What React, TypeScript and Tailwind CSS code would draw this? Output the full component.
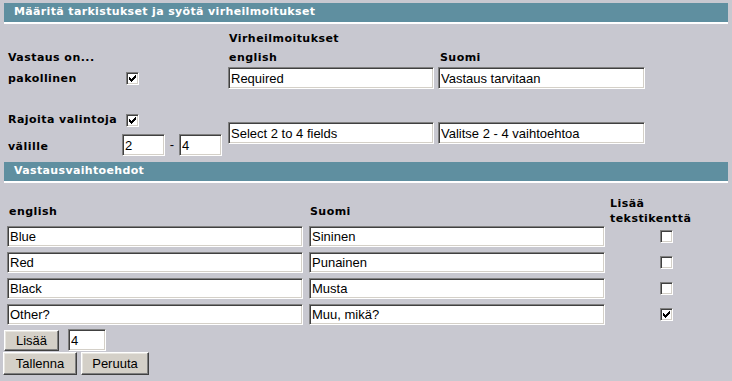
import type { ReactNode } from "react"

const label = "font-['DejaVu_Sans',Verdana,sans-serif] text-[11px] font-bold leading-[15px] tracking-[0.45px] text-black whitespace-nowrap"

function Header({ children }: { children: ReactNode }) {
    return (
        <div className="mx-[4px] flex h-[21px] items-center border-b-2 border-white bg-[#5f8fa0] pl-[10px] font-['DejaVu_Sans',Verdana,sans-serif] text-[11px] font-bold tracking-[0.35px] text-white">
            {children}
        </div>
    )
}

function Field({ value, className = "" }: { value: string; className?: string }) {
    return (
        <input
            readOnly
            value={value}
            className={`border border-t-[#808080] border-l-[#808080] border-r-white border-b-white bg-white px-[2px] font-['Liberation_Sans',Arial,sans-serif] text-[13px] text-black shadow-[inset_1px_1px_0_#404040,inset_-1px_-1px_0_#d4d0c8] outline-none ${className}`}
        />
    )
}

function Check({ checked = false, className = "" }: { checked?: boolean; className?: string }) {
    return (
        <span
            className={`inline-flex h-[13px] w-[13px] shrink-0 items-center justify-center border border-t-[#808080] border-l-[#808080] border-r-white border-b-white bg-white shadow-[inset_1px_1px_0_#404040,inset_-1px_-1px_0_#d4d0c8] ${className}`}
        >
            {checked && (
                <svg width="7" height="7" viewBox="0 0 7 7" shapeRendering="crispEdges">
                    <path
                        fill="#000"
                        d="M6 0h1v3h-1zM5 1h1v3h-1zM4 2h1v3h-1zM3 3h1v3h-1zM2 4h1v3h-1zM1 3h1v3h-1zM0 2h1v3h-1z"
                    />
                </svg>
            )}
        </span>
    )
}

function Button({ children, className = "" }: { children: ReactNode; className?: string }) {
    return (
        <button className={`border border-t-white border-l-white border-r-[#404040] border-b-[#404040] bg-[#d4d0c8] font-['Liberation_Sans',Arial,sans-serif] text-[13px] text-black shadow-[inset_-1px_-1px_0_#808080,inset_1px_1px_0_#e8e6e0] ${className}`}>
            {children}
        </button>
    )
}

const options = [
    { en: "Blue", fi: "Sininen", text: false },
    { en: "Red", fi: "Punainen", text: false },
    { en: "Black", fi: "Musta", text: false },
    { en: "Other?", fi: "Muu, mikä?", text: true },
]

export default function App() {
    return (
        <div className="h-[381px] w-[732px] overflow-hidden bg-[#c8c8d0] pt-[3px]">
            <Header>Määritä tarkistukset ja syötä virheilmoitukset</Header>

            {/* tarkistukset */}
            <div className="pl-[4px] pt-[7px]">
                <div className="flex h-[15px]">
                    <div className="w-[224px]" />
                    <span className={`${label} pl-[1px]`}>Virheilmoitukset</span>
                </div>
                <div className="mt-[4px] flex h-[15px]">
                    <span className={`${label} w-[224px] pl-[4px]`}>Vastaus on...</span>
                    <span className={`${label} w-[210px] pl-[1px]`}>english</span>
                    <span className={`${label} pl-[2px]`}>Suomi</span>
                </div>
                <div className="mt-[2px] flex h-[22px] items-center">
                    <div className="flex w-[224px] items-center">
                        <span className={`${label} w-[118px] pl-[4px]`}>pakollinen</span>
                        <Check checked className="ml-[4px]" />
                    </div>
                    <Field value="Required" className="h-[22px] w-[206px]" />
                    <Field value="Vastaus tarvitaan" className="ml-[4px] h-[22px] w-[207px]" />
                </div>
                <div className="mt-[23px] flex items-start">
                    <div className="flex w-[224px] flex-col">
                        <div className="flex h-[15px] items-center">
                            <span className={`${label} w-[118px] pl-[4px]`}>Rajoita valintoja</span>
                            <Check checked className="ml-[4px] mt-[2px]" />
                        </div>
                        <div className="mt-[7px] flex h-[22px] items-center">
                            <span className={`${label} w-[118px] pl-[4px] pt-[3px]`}>välille</span>
                            <Field value="2" className="h-[22px] w-[43px]" />
                            <span className="w-[14px] text-center font-['Liberation_Sans',Arial,sans-serif] text-[13px] text-black">-</span>
                            <Field value="4" className="h-[22px] w-[43px]" />
                        </div>
                    </div>
                    <Field value="Select 2 to 4 fields" className="mt-[10px] h-[22px] w-[206px]" />
                    <Field value="Valitse 2 - 4 vaihtoehtoa" className="ml-[4px] mt-[10px] h-[22px] w-[207px]" />
                </div>
            </div>

            <div className="mt-[6px]">
                <Header>Vastausvaihtoehdot</Header>
            </div>

            {/* vastausvaihtoehdot */}
            <div className="pl-[7px] pt-[13px]">
                <div className="grid h-[26px] grid-cols-[302px_301px_112px] items-center">
                    <span className={`${label} pl-[2px]`}>english</span>
                    <span className={`${label} pl-[1px]`}>Suomi</span>
                    <span className={`${label} leading-[13px]`}>
                        Lisää
                        <br />
                        tekstikenttä
                    </span>
                </div>
                <div className="mt-[4px] flex flex-col gap-[5px]">
                    {options.map((o) => (
                        <div key={o.en} className="grid h-[21px] grid-cols-[302px_301px_112px] items-center">
                            <Field value={o.en} className="h-[21px] w-[296px]" />
                            <Field value={o.fi} className="h-[21px] w-[296px]" />
                            <div className="flex justify-center">
                                <Check checked={o.text} />
                            </div>
                        </div>
                    ))}
                </div>
            </div>

            <div className="mt-[4px] flex items-center pl-[4px]">
                <Button className="h-[21px] w-[55px]">Lisää</Button>
                <Field value="4" className="ml-[9px] h-[22px] w-[38px]" />
            </div>
            <div className="mt-[1px] flex pl-[3px]">
                <Button className="h-[23px] w-[74px]">Tallenna</Button>
                <Button className="ml-[4px] h-[23px] w-[68px]">Peruuta</Button>
            </div>
        </div>
    )
}
